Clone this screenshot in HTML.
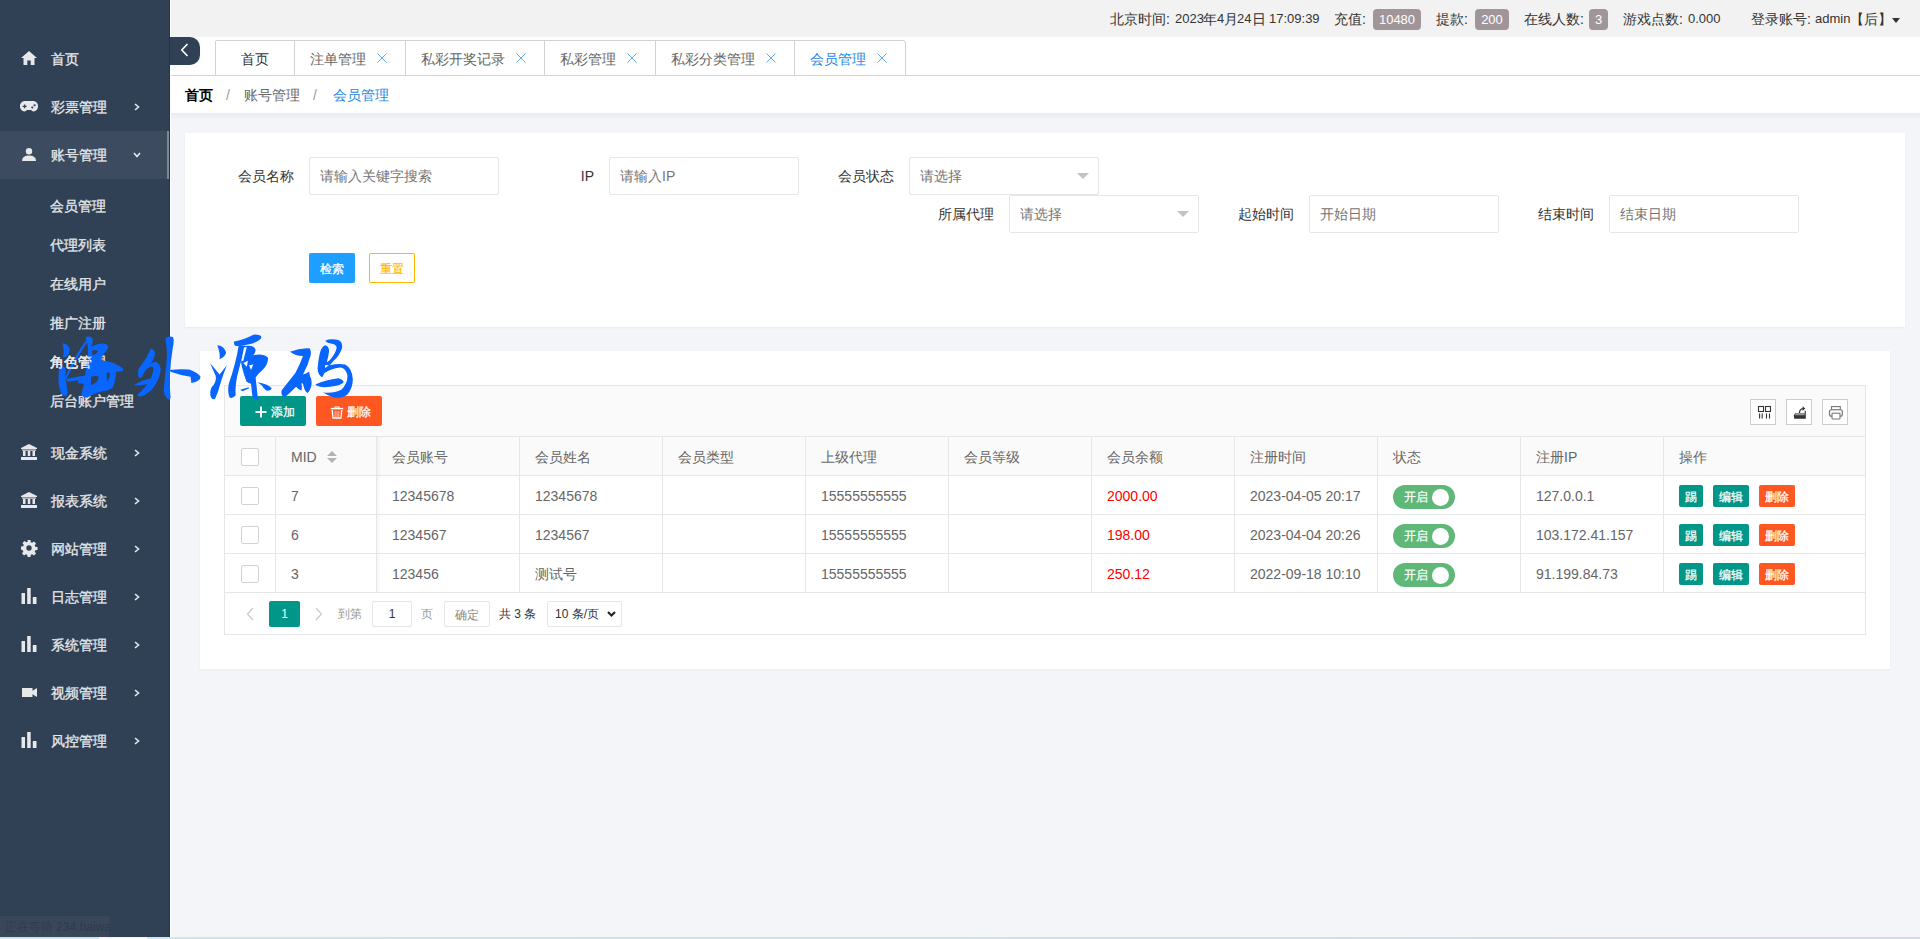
<!DOCTYPE html><html><head><meta charset="utf-8"><style>
*{box-sizing:border-box}
html,body{margin:0;padding:0}
body{width:1920px;height:939px;overflow:hidden;position:relative;background:#f4f5f9;font-family:"Liberation Sans",sans-serif;font-size:14px;color:#333}
.a{position:absolute;white-space:nowrap}
svg{position:absolute;overflow:visible}
</style></head><body>
<div class="a" style="left:170px;top:113px;width:1750px;height:826px;background:#f4f5f9"></div>
<div class="a" style="left:170px;top:113px;width:1750px;height:6px;background:linear-gradient(#e9eaef,#f4f5f9)"></div>
<div class="a" style="left:185px;top:133px;width:1720px;height:194px;background:#fff;box-shadow:0 1px 2px rgba(0,0,0,.05)"></div>
<div class="a" style="left:200px;top:351px;width:1690px;height:318px;background:#fff;box-shadow:0 1px 2px rgba(0,0,0,.05)"></div>
<div class="a" style="left:0;top:0;width:170px;height:937px;background:#304156"></div>
<div class="a" style="left:170px;top:0;width:1px;height:937px;background:#fff"></div>
<div class="a" style="left:0;top:131px;width:170px;height:48px;background:#3d4b60"></div>
<div class="a" style="left:167px;top:131px;width:3px;height:48px;background:#7b8697"></div>
<div class="a" style="left:51px;top:35px;height:48px;line-height:48px;color:#e6e8ea;font-size:14px;-webkit-text-stroke:0.3px #e6e8ea">首页</div>
<svg style="left:21px;top:51px" width="16" height="14" viewBox="0 0 16 14"><path d="M8 0 L16 7 L13.5 7 L13.5 14 L9.7 14 L9.7 9.5 L6.3 9.5 L6.3 14 L2.5 14 L2.5 7 L0 7 Z" fill="#e6e8ea"/></svg>
<div class="a" style="left:51px;top:83px;height:48px;line-height:48px;color:#e6e8ea;font-size:14px;-webkit-text-stroke:0.3px #e6e8ea">彩票管理</div>
<svg style="left:20px;top:101px" width="18" height="10.5" viewBox="0 0 18 11" preserveAspectRatio="none"><path d="M4.5 0 H13.5 A5 5 0 0 1 18 5.5 A5 5 0 0 1 13.5 11 Q12 11 11 9.5 H7 Q6 11 4.5 11 A5 5 0 0 1 0 5.5 A5 5 0 0 1 4.5 0Z" fill="#e6e8ea"/><path d="M2.6 5.6 H6.6 M4.6 3.6 V7.6" stroke="#304156" stroke-width="1.3"/><circle cx="12.3" cy="6.8" r="1.1" fill="#304156"/><circle cx="14.6" cy="4.4" r="1.1" fill="#304156"/></svg>
<svg style="left:134px;top:103px" width="6" height="8" viewBox="0 0 6 8"><path d="M1 1 L4.5 4 L1 7" stroke="#e6e8ea" stroke-width="1.6" fill="none"/></svg>
<div class="a" style="left:51px;top:131px;height:48px;line-height:48px;color:#e6e8ea;font-size:14px;-webkit-text-stroke:0.3px #e6e8ea">账号管理</div>
<svg style="left:22px;top:148px" width="14" height="13" viewBox="0 0 14 13"><circle cx="7" cy="3.2" r="3.2" fill="#e6e8ea"/><path d="M0 13 Q0 7.5 7 7.5 Q14 7.5 14 13Z" fill="#e6e8ea"/></svg>
<svg style="left:133px;top:152px" width="8" height="6" viewBox="0 0 8 6"><path d="M1 1 L4 4.5 L7 1" stroke="#e6e8ea" stroke-width="1.6" fill="none"/></svg>
<div class="a" style="left:50px;top:187px;height:39px;line-height:39px;color:#e6e8ea;font-size:14px;-webkit-text-stroke:0.3px #e6e8ea">会员管理</div>
<div class="a" style="left:50px;top:226px;height:39px;line-height:39px;color:#e6e8ea;font-size:14px;-webkit-text-stroke:0.3px #e6e8ea">代理列表</div>
<div class="a" style="left:50px;top:265px;height:39px;line-height:39px;color:#e6e8ea;font-size:14px;-webkit-text-stroke:0.3px #e6e8ea">在线用户</div>
<div class="a" style="left:50px;top:304px;height:39px;line-height:39px;color:#e6e8ea;font-size:14px;-webkit-text-stroke:0.3px #e6e8ea">推广注册</div>
<div class="a" style="left:50px;top:343px;height:39px;line-height:39px;color:#e6e8ea;font-size:14px;-webkit-text-stroke:0.3px #e6e8ea">角色管理</div>
<div class="a" style="left:50px;top:382px;height:39px;line-height:39px;color:#e6e8ea;font-size:14px;-webkit-text-stroke:0.3px #e6e8ea">后台账户管理</div>
<div class="a" style="left:51px;top:429px;height:48px;line-height:48px;color:#e6e8ea;font-size:14px;-webkit-text-stroke:0.3px #e6e8ea">现金系统</div>
<svg style="left:21px;top:444px" width="16" height="16" viewBox="0 0 16 16"><path d="M8 0 L16 4 V5 H0 V4Z" fill="#e6e8ea"/><rect x="1" y="5.5" width="14" height="1.2" fill="#e6e8ea"/><rect x="2" y="7" width="2.5" height="5" fill="#e6e8ea"/><rect x="6.75" y="7" width="2.5" height="5" fill="#e6e8ea"/><rect x="11.5" y="7" width="2.5" height="5" fill="#e6e8ea"/><rect x="0" y="13" width="16" height="3" fill="#e6e8ea"/></svg>
<svg style="left:134px;top:449px" width="6" height="8" viewBox="0 0 6 8"><path d="M1 1 L4.5 4 L1 7" stroke="#e6e8ea" stroke-width="1.6" fill="none"/></svg>
<div class="a" style="left:51px;top:477px;height:48px;line-height:48px;color:#e6e8ea;font-size:14px;-webkit-text-stroke:0.3px #e6e8ea">报表系统</div>
<svg style="left:21px;top:492px" width="16" height="16" viewBox="0 0 16 16"><path d="M8 0 L16 4 V5 H0 V4Z" fill="#e6e8ea"/><rect x="1" y="5.5" width="14" height="1.2" fill="#e6e8ea"/><rect x="2" y="7" width="2.5" height="5" fill="#e6e8ea"/><rect x="6.75" y="7" width="2.5" height="5" fill="#e6e8ea"/><rect x="11.5" y="7" width="2.5" height="5" fill="#e6e8ea"/><rect x="0" y="13" width="16" height="3" fill="#e6e8ea"/></svg>
<svg style="left:134px;top:497px" width="6" height="8" viewBox="0 0 6 8"><path d="M1 1 L4.5 4 L1 7" stroke="#e6e8ea" stroke-width="1.6" fill="none"/></svg>
<div class="a" style="left:51px;top:525px;height:48px;line-height:48px;color:#e6e8ea;font-size:14px;-webkit-text-stroke:0.3px #e6e8ea">网站管理</div>
<svg style="left:21px;top:540px" width="16" height="16" viewBox="0 0 16 16"><path d="M6.6 0h2.8l.4 2.2 1.3.6 1.9-1.3 2 2-1.3 1.9.6 1.3 2.2.4v2.8l-2.2.4-.6 1.3 1.3 1.9-2 2-1.9-1.3-1.3.6-.4 2.2H6.6l-.4-2.2-1.3-.6-1.9 1.3-2-2 1.3-1.9-.6-1.3L0 9.4V6.6l2.2-.4.6-1.3-1.3-1.9 2-2 1.9 1.3 1.3-.6z M8 5.3A2.7 2.7 0 1 0 8 10.7 2.7 2.7 0 1 0 8 5.3z" fill="#e6e8ea" fill-rule="evenodd"/></svg>
<svg style="left:134px;top:545px" width="6" height="8" viewBox="0 0 6 8"><path d="M1 1 L4.5 4 L1 7" stroke="#e6e8ea" stroke-width="1.6" fill="none"/></svg>
<div class="a" style="left:51px;top:573px;height:48px;line-height:48px;color:#e6e8ea;font-size:14px;-webkit-text-stroke:0.3px #e6e8ea">日志管理</div>
<svg style="left:21px;top:588px" width="16" height="16" viewBox="0 0 16 16"><rect x="0.5" y="5" width="3.5" height="11" fill="#e6e8ea"/><rect x="6.2" y="0" width="3.5" height="16" fill="#e6e8ea"/><rect x="11.8" y="9" width="3.7" height="7" fill="#e6e8ea"/></svg>
<svg style="left:134px;top:593px" width="6" height="8" viewBox="0 0 6 8"><path d="M1 1 L4.5 4 L1 7" stroke="#e6e8ea" stroke-width="1.6" fill="none"/></svg>
<div class="a" style="left:51px;top:621px;height:48px;line-height:48px;color:#e6e8ea;font-size:14px;-webkit-text-stroke:0.3px #e6e8ea">系统管理</div>
<svg style="left:21px;top:636px" width="16" height="16" viewBox="0 0 16 16"><rect x="0.5" y="5" width="3.5" height="11" fill="#e6e8ea"/><rect x="6.2" y="0" width="3.5" height="16" fill="#e6e8ea"/><rect x="11.8" y="9" width="3.7" height="7" fill="#e6e8ea"/></svg>
<svg style="left:134px;top:641px" width="6" height="8" viewBox="0 0 6 8"><path d="M1 1 L4.5 4 L1 7" stroke="#e6e8ea" stroke-width="1.6" fill="none"/></svg>
<div class="a" style="left:51px;top:669px;height:48px;line-height:48px;color:#e6e8ea;font-size:14px;-webkit-text-stroke:0.3px #e6e8ea">视频管理</div>
<svg style="left:22px;top:688px" width="15" height="9" viewBox="0 0 15 9"><rect x="0" y="0" width="10.5" height="9" fill="#e6e8ea"/><path d="M10 3 L15 0 V9 L10 6Z" fill="#e6e8ea"/></svg>
<svg style="left:134px;top:689px" width="6" height="8" viewBox="0 0 6 8"><path d="M1 1 L4.5 4 L1 7" stroke="#e6e8ea" stroke-width="1.6" fill="none"/></svg>
<div class="a" style="left:51px;top:717px;height:48px;line-height:48px;color:#e6e8ea;font-size:14px;-webkit-text-stroke:0.3px #e6e8ea">风控管理</div>
<svg style="left:21px;top:732px" width="16" height="16" viewBox="0 0 16 16"><rect x="0.5" y="5" width="3.5" height="11" fill="#e6e8ea"/><rect x="6.2" y="0" width="3.5" height="16" fill="#e6e8ea"/><rect x="11.8" y="9" width="3.7" height="7" fill="#e6e8ea"/></svg>
<svg style="left:134px;top:737px" width="6" height="8" viewBox="0 0 6 8"><path d="M1 1 L4.5 4 L1 7" stroke="#e6e8ea" stroke-width="1.6" fill="none"/></svg>
<div class="a" style="left:0;top:916px;width:109px;height:21px;background:#3a4759;color:#2d3b50;font-size:12px;line-height:22px;padding-left:5px;overflow:hidden">正在等待 234.haiwai</div>
<div class="a" style="left:0;top:937px;width:1920px;height:2px;background:linear-gradient(to right,#cfe4ee,#cfe3ec 50%,#d2dcea)"></div>
<div class="a" style="left:169px;top:0;width:1px;height:937px;background:#26344a"></div>
<div class="a" style="left:99px;top:937px;width:48px;height:2px;background:#f4f8fa"></div>
<div class="a" style="left:171px;top:0;width:1749px;height:37px;background:#f2f2f2"></div>
<div class="a" style="left:1110px;top:9px;line-height:20px;height:20px;color:#333;font-size:14px">北京时间</div>
<div class="a" style="left:1166px;top:9px;line-height:20px;height:20px;color:#333;font-size:14px">:</div>
<div class="a" style="left:1175px;top:9px;line-height:20px;height:20px;color:#333;font-size:13px">2023</div>
<div class="a" style="left:1203px;top:9px;line-height:20px;height:20px;color:#333;font-size:14px">年</div>
<div class="a" style="left:1217px;top:9px;line-height:20px;height:20px;color:#333;font-size:13px">4</div>
<div class="a" style="left:1224px;top:9px;line-height:20px;height:20px;color:#333;font-size:14px">月</div>
<div class="a" style="left:1237px;top:9px;line-height:20px;height:20px;color:#333;font-size:13px">24</div>
<div class="a" style="left:1252px;top:9px;line-height:20px;height:20px;color:#333;font-size:14px">日</div>
<div class="a" style="left:1269px;top:9px;line-height:20px;height:20px;color:#333;font-size:13px">17:09:39</div>
<div class="a" style="left:1334px;top:9px;line-height:20px;height:20px;color:#333;font-size:14px">充值</div>
<div class="a" style="left:1362px;top:9px;line-height:20px;height:20px;color:#333;font-size:14px">:</div>
<div class="a" style="left:1373px;top:9px;width:48px;height:21px;line-height:21px;background:#a09699;color:#fff;border-radius:4px;text-align:center;font-size:13px">10480</div>
<div class="a" style="left:1436px;top:9px;line-height:20px;height:20px;color:#333;font-size:14px">提款</div>
<div class="a" style="left:1464px;top:9px;line-height:20px;height:20px;color:#333;font-size:14px">:</div>
<div class="a" style="left:1475px;top:9px;width:34px;height:21px;line-height:21px;background:#a09699;color:#fff;border-radius:4px;text-align:center;font-size:13px">200</div>
<div class="a" style="left:1524px;top:9px;line-height:20px;height:20px;color:#333;font-size:14px">在线人数</div>
<div class="a" style="left:1580px;top:9px;line-height:20px;height:20px;color:#333;font-size:14px">:</div>
<div class="a" style="left:1589px;top:9px;width:19px;height:21px;line-height:21px;background:#a09699;color:#fff;border-radius:4px;text-align:center;font-size:13px">3</div>
<div class="a" style="left:1623px;top:9px;line-height:20px;height:20px;color:#333;font-size:14px">游戏点数</div>
<div class="a" style="left:1679px;top:9px;line-height:20px;height:20px;color:#333;font-size:14px">:</div>
<div class="a" style="left:1688px;top:9px;line-height:20px;height:20px;color:#333;font-size:13px">0.000</div>
<div class="a" style="left:1751px;top:9px;line-height:20px;height:20px;color:#333;font-size:14px">登录账号</div>
<div class="a" style="left:1807px;top:9px;line-height:20px;height:20px;color:#333;font-size:14px">:</div>
<div class="a" style="left:1815px;top:9px;line-height:20px;height:20px;color:#333;font-size:13px">admin</div>
<div class="a" style="left:1850px;top:9px;line-height:20px;height:20px;color:#333;font-size:14px">【后】</div>
<svg style="left:1892px;top:18px" width="8" height="5" viewBox="0 0 8 5"><path d="M0 0 H8 L4 5Z" fill="#333"/></svg>
<div class="a" style="left:171px;top:37px;width:1749px;height:39px;background:#fff;border-bottom:1px solid #d2d2d2"></div>
<div class="a" style="left:170px;top:37px;width:30px;height:28px;background:#304156;border-radius:0 10px 10px 0"></div>
<svg style="left:180px;top:43px" width="9" height="14" viewBox="0 0 9 14"><path d="M7.5 1 L1.8 7 L7.5 13" stroke="#fff" stroke-width="1.6" fill="none"/></svg>
<div class="a" style="left:215px;top:40px;width:691px;height:36px;border:1px solid #d2d2d2;border-bottom:none;border-radius:2px 4px 0 0;background:#fff"></div>
<div class="a" style="left:171px;top:75px;width:1749px;height:1px;background:#d2d2d2"></div>
<div class="a" style="left:241px;top:49px;line-height:20px;color:#333;font-size:14px">首页</div>
<div class="a" style="left:294px;top:41px;width:1px;height:34px;background:#d2d2d2"></div>
<div class="a" style="left:310px;top:49px;line-height:20px;color:#666;font-size:14px">注单管理</div>
<svg style="left:377px;top:53px" width="10" height="10" viewBox="0 0 10 10"><path d="M0.5 0.5 L9.5 9.5 M9.5 0.5 L0.5 9.5" stroke="#4aa4f2" stroke-width="0.9"/></svg>
<div class="a" style="left:405px;top:41px;width:1px;height:34px;background:#d2d2d2"></div>
<div class="a" style="left:421px;top:49px;line-height:20px;color:#666;font-size:14px">私彩开奖记录</div>
<svg style="left:516px;top:53px" width="10" height="10" viewBox="0 0 10 10"><path d="M0.5 0.5 L9.5 9.5 M9.5 0.5 L0.5 9.5" stroke="#4aa4f2" stroke-width="0.9"/></svg>
<div class="a" style="left:544px;top:41px;width:1px;height:34px;background:#d2d2d2"></div>
<div class="a" style="left:560px;top:49px;line-height:20px;color:#666;font-size:14px">私彩管理</div>
<svg style="left:627px;top:53px" width="10" height="10" viewBox="0 0 10 10"><path d="M0.5 0.5 L9.5 9.5 M9.5 0.5 L0.5 9.5" stroke="#4aa4f2" stroke-width="0.9"/></svg>
<div class="a" style="left:655px;top:41px;width:1px;height:34px;background:#d2d2d2"></div>
<div class="a" style="left:671px;top:49px;line-height:20px;color:#666;font-size:14px">私彩分类管理</div>
<svg style="left:766px;top:53px" width="10" height="10" viewBox="0 0 10 10"><path d="M0.5 0.5 L9.5 9.5 M9.5 0.5 L0.5 9.5" stroke="#4aa4f2" stroke-width="0.9"/></svg>
<div class="a" style="left:794px;top:41px;width:1px;height:34px;background:#d2d2d2"></div>
<div class="a" style="left:810px;top:49px;line-height:20px;color:#1e88e5;font-size:14px">会员管理</div>
<svg style="left:877px;top:53px" width="10" height="10" viewBox="0 0 10 10"><path d="M0.5 0.5 L9.5 9.5 M9.5 0.5 L0.5 9.5" stroke="#4aa4f2" stroke-width="0.9"/></svg>
<div class="a" style="left:171px;top:76px;width:1749px;height:37px;background:#fff"></div>
<div class="a" style="left:185px;top:85px;line-height:20px;height:20px;color:#000;font-size:14px;font-weight:bold">首页</div>
<div class="a" style="left:226px;top:85px;line-height:20px;height:20px;color:#999;font-size:14px;">/</div>
<div class="a" style="left:244px;top:85px;line-height:20px;height:20px;color:#666;font-size:14px;">账号管理</div>
<div class="a" style="left:313px;top:85px;line-height:20px;height:20px;color:#999;font-size:14px;">/</div>
<div class="a" style="left:333px;top:85px;line-height:20px;height:20px;color:#1e88e5;font-size:14px;">会员管理</div>
<div class="a" style="left:294px;top:157px;width:120px;margin-left:-120px;height:38px;line-height:38px;text-align:right;color:#333">会员名称</div>
<div class="a" style="left:309px;top:157px;width:190px;height:38px;border:1px solid #e6e6e6;border-radius:2px;background:#fff;line-height:36px;padding-left:10px;color:#757575">请输入关键字搜索</div>
<div class="a" style="left:594px;top:157px;width:120px;margin-left:-120px;height:38px;line-height:38px;text-align:right;color:#333">IP</div>
<div class="a" style="left:609px;top:157px;width:190px;height:38px;border:1px solid #e6e6e6;border-radius:2px;background:#fff;line-height:36px;padding-left:10px;color:#757575">请输入IP</div>
<div class="a" style="left:894px;top:157px;width:120px;margin-left:-120px;height:38px;line-height:38px;text-align:right;color:#333">会员状态</div>
<div class="a" style="left:909px;top:157px;width:190px;height:38px;border:1px solid #e6e6e6;border-radius:2px;background:#fff;line-height:36px;padding-left:10px;color:#757575">请选择</div>
<svg style="left:1077px;top:173px" width="12" height="6" viewBox="0 0 12 6"><path d="M0 0 H12 L6 6Z" fill="#c2c2c2"/></svg>
<div class="a" style="left:994px;top:195px;width:120px;margin-left:-120px;height:38px;line-height:38px;text-align:right;color:#333">所属代理</div>
<div class="a" style="left:1009px;top:195px;width:190px;height:38px;border:1px solid #e6e6e6;border-radius:2px;background:#fff;line-height:36px;padding-left:10px;color:#757575">请选择</div>
<svg style="left:1177px;top:211px" width="12" height="6" viewBox="0 0 12 6"><path d="M0 0 H12 L6 6Z" fill="#c2c2c2"/></svg>
<div class="a" style="left:1294px;top:195px;width:120px;margin-left:-120px;height:38px;line-height:38px;text-align:right;color:#333">起始时间</div>
<div class="a" style="left:1309px;top:195px;width:190px;height:38px;border:1px solid #e6e6e6;border-radius:2px;background:#fff;line-height:36px;padding-left:10px;color:#757575">开始日期</div>
<div class="a" style="left:1594px;top:195px;width:120px;margin-left:-120px;height:38px;line-height:38px;text-align:right;color:#333">结束时间</div>
<div class="a" style="left:1609px;top:195px;width:190px;height:38px;border:1px solid #e6e6e6;border-radius:2px;background:#fff;line-height:36px;padding-left:10px;color:#757575">结束日期</div>
<div class="a" style="left:309px;top:253px;width:46px;height:30px;line-height:32px;background:#1e9fff;color:#fff;font-size:12px;text-align:center;border-radius:2px;-webkit-text-stroke:0.25px #fff">检索</div>
<div class="a" style="left:369px;top:253px;width:46px;height:30px;line-height:30px;background:#fff;border:1px solid #ffb800;color:#ffb800;font-size:12px;text-align:center;border-radius:2px;-webkit-text-stroke:0.2px #ffb800">重置</div>
<div class="a" style="left:224px;top:385px;width:1642px;height:250px;border:1px solid #e6e6e6;background:#fff"></div>
<div class="a" style="left:225px;top:386px;width:1640px;height:51px;background:#fafafa;border-bottom:1px solid #e6e6e6"></div>
<div class="a" style="left:240px;top:396px;width:66px;height:30px;background:#009688;border-radius:2px"></div>
<svg style="left:255px;top:406px" width="12" height="12" viewBox="0 0 12 12"><path d="M6 0.5 V11.5 M0.5 6 H11.5" stroke="#fff" stroke-width="2"/></svg>
<div class="a" style="left:271px;top:402px;line-height:20px;color:#fff;font-size:12px;-webkit-text-stroke:0.25px #fff">添加</div>
<div class="a" style="left:316px;top:396px;width:66px;height:30px;background:#ff5722;border-radius:2px"></div>
<svg style="left:330px;top:406px" width="14" height="13" viewBox="0 0 14 13"><path d="M0.8 2.6 H13.2" stroke="#fff" stroke-width="1.4"/><path d="M5 2.2 V1 H9 V2.2" stroke="#fff" stroke-width="1.1" fill="none"/><path d="M2.2 4 L3 12 H11 L11.8 4" stroke="#fff" stroke-width="1.3" fill="none"/><path d="M5.2 5 V11 M7 5 V11 M8.8 5 V11" stroke="#ffd9cc" stroke-width="0.8"/></svg>
<div class="a" style="left:347px;top:402px;line-height:20px;color:#fff;font-size:12px;-webkit-text-stroke:0.25px #fff">删除</div>
<div class="a" style="left:1750px;top:399px;width:26px;height:26px;border:1px solid #ccc;background:#fff"></div>
<div class="a" style="left:1786px;top:399px;width:26px;height:26px;border:1px solid #ccc;background:#fff"></div>
<div class="a" style="left:1822px;top:399px;width:26px;height:26px;border:1px solid #ccc;background:#fff"></div>
<svg style="left:1757px;top:405px" width="15" height="15" viewBox="0 0 15 15"><rect x="1.5" y="1.5" width="5" height="5" fill="none" stroke="#333" stroke-width="1.1"/><rect x="8.5" y="1.5" width="5" height="5" fill="none" stroke="#333" stroke-width="1.1"/><path d="M2.6 8.5 V13.6 M5.2 8.5 V13.6 M9.5 8.5 V13.6 M12.5 8.5 V13.6" stroke="#333" stroke-width="1.1"/></svg>
<svg style="left:1793px;top:405px" width="15" height="15" viewBox="0 0 15 15"><path d="M0.8 10.2 L2.3 8.3 H11.7 V5.8 H12.8 V13.8 H1.2Z" fill="#333"/><path d="M3 8.3 H11.7 V10.2 H1.6Z" fill="#999"/><path d="M6.5 8 Q6.5 3.8 10 3.6" stroke="#333" stroke-width="1.3" fill="none"/><path d="M9.6 1.2 L12.3 3.6 L9.6 6Z" fill="#333"/></svg>
<svg style="left:1828px;top:405px" width="16" height="16" viewBox="0 0 16 16"><rect x="3.5" y="1.6" width="8.8" height="3.4" fill="none" stroke="#777" stroke-width="1.1"/><rect x="1.4" y="4.8" width="13" height="6.5" rx="2" fill="#f4f4f4" stroke="#777" stroke-width="1.1"/><rect x="4" y="8.3" width="8" height="5.7" rx="0.8" fill="#fff" stroke="#777" stroke-width="1.1"/></svg>
<div class="a" style="left:225px;top:437px;width:1640px;height:38px;background:#fafafa"></div>
<div class="a" style="left:225px;top:475px;width:1640px;height:1px;background:#e6e6e6"></div>
<div class="a" style="left:225px;top:514px;width:1640px;height:1px;background:#e6e6e6"></div>
<div class="a" style="left:225px;top:553px;width:1640px;height:1px;background:#e6e6e6"></div>
<div class="a" style="left:225px;top:592px;width:1640px;height:1px;background:#e6e6e6"></div>
<div class="a" style="left:275px;top:437px;width:1px;height:155px;background:#e6e6e6"></div>
<div class="a" style="left:376px;top:437px;width:1px;height:155px;background:#e6e6e6"></div>
<div class="a" style="left:519px;top:437px;width:1px;height:155px;background:#e6e6e6"></div>
<div class="a" style="left:662px;top:437px;width:1px;height:155px;background:#e6e6e6"></div>
<div class="a" style="left:805px;top:437px;width:1px;height:155px;background:#e6e6e6"></div>
<div class="a" style="left:948px;top:437px;width:1px;height:155px;background:#e6e6e6"></div>
<div class="a" style="left:1091px;top:437px;width:1px;height:155px;background:#e6e6e6"></div>
<div class="a" style="left:1234px;top:437px;width:1px;height:155px;background:#e6e6e6"></div>
<div class="a" style="left:1377px;top:437px;width:1px;height:155px;background:#e6e6e6"></div>
<div class="a" style="left:1520px;top:437px;width:1px;height:155px;background:#e6e6e6"></div>
<div class="a" style="left:1663px;top:437px;width:1px;height:155px;background:#e6e6e6"></div>
<div class="a" style="left:377px;top:437px;width:4px;height:155px;background:linear-gradient(to right,rgba(0,0,0,.04),rgba(0,0,0,0))"></div>
<div class="a" style="left:291px;top:447px;line-height:20px;color:#666;font-size:14px">MID</div>
<div class="a" style="left:392px;top:447px;line-height:20px;color:#666;font-size:14px">会员账号</div>
<div class="a" style="left:535px;top:447px;line-height:20px;color:#666;font-size:14px">会员姓名</div>
<div class="a" style="left:678px;top:447px;line-height:20px;color:#666;font-size:14px">会员类型</div>
<div class="a" style="left:821px;top:447px;line-height:20px;color:#666;font-size:14px">上级代理</div>
<div class="a" style="left:964px;top:447px;line-height:20px;color:#666;font-size:14px">会员等级</div>
<div class="a" style="left:1107px;top:447px;line-height:20px;color:#666;font-size:14px">会员余额</div>
<div class="a" style="left:1250px;top:447px;line-height:20px;color:#666;font-size:14px">注册时间</div>
<div class="a" style="left:1393px;top:447px;line-height:20px;color:#666;font-size:14px">状态</div>
<div class="a" style="left:1536px;top:447px;line-height:20px;color:#666;font-size:14px">注册IP</div>
<div class="a" style="left:1679px;top:447px;line-height:20px;color:#666;font-size:14px">操作</div>
<svg style="left:327px;top:451px" width="10" height="13" viewBox="0 0 10 13"><path d="M5 0 L10 5 H0Z M0 7 H10 L5 12Z" fill="#b2b2b2"/></svg>
<div class="a" style="left:291px;top:486px;line-height:20px;color:#666;font-size:14px">7</div>
<div class="a" style="left:392px;top:486px;line-height:20px;color:#666;font-size:14px">12345678</div>
<div class="a" style="left:535px;top:486px;line-height:20px;color:#666;font-size:14px">12345678</div>
<div class="a" style="left:678px;top:486px;line-height:20px;color:#666;font-size:14px"></div>
<div class="a" style="left:821px;top:486px;line-height:20px;color:#666;font-size:14px">15555555555</div>
<div class="a" style="left:964px;top:486px;line-height:20px;color:#666;font-size:14px"></div>
<div class="a" style="left:1107px;top:486px;line-height:20px;color:#f00;font-size:14px">2000.00</div>
<div class="a" style="left:1250px;top:486px;line-height:20px;color:#666;font-size:14px">2023-04-05 20:17</div>
<div class="a" style="left:1393px;top:485px;width:62px;height:24px;border-radius:12px;background:#5fb878"></div>
<div class="a" style="left:1432px;top:489px;width:17px;height:17px;border-radius:50%;background:#fff"></div>
<div class="a" style="left:1404px;top:487px;line-height:20px;color:#fff;font-size:12px;-webkit-text-stroke:0.2px #fff">开启</div>
<div class="a" style="left:1536px;top:486px;line-height:20px;color:#666;font-size:14px">127.0.0.1</div>
<div class="a" style="left:1679px;top:485px;width:24px;height:22px;line-height:24px;background:#009688;color:#fff;font-size:12px;text-align:center;border-radius:2px;-webkit-text-stroke:0.25px #fff">踢</div>
<div class="a" style="left:1713px;top:485px;width:36px;height:22px;line-height:24px;background:#009688;color:#fff;font-size:12px;text-align:center;border-radius:2px;-webkit-text-stroke:0.25px #fff">编辑</div>
<div class="a" style="left:1759px;top:485px;width:36px;height:22px;line-height:24px;background:#ff5722;color:#fff;font-size:12px;text-align:center;border-radius:2px;-webkit-text-stroke:0.25px #fff">删除</div>
<div class="a" style="left:291px;top:525px;line-height:20px;color:#666;font-size:14px">6</div>
<div class="a" style="left:392px;top:525px;line-height:20px;color:#666;font-size:14px">1234567</div>
<div class="a" style="left:535px;top:525px;line-height:20px;color:#666;font-size:14px">1234567</div>
<div class="a" style="left:678px;top:525px;line-height:20px;color:#666;font-size:14px"></div>
<div class="a" style="left:821px;top:525px;line-height:20px;color:#666;font-size:14px">15555555555</div>
<div class="a" style="left:964px;top:525px;line-height:20px;color:#666;font-size:14px"></div>
<div class="a" style="left:1107px;top:525px;line-height:20px;color:#f00;font-size:14px">198.00</div>
<div class="a" style="left:1250px;top:525px;line-height:20px;color:#666;font-size:14px">2023-04-04 20:26</div>
<div class="a" style="left:1393px;top:524px;width:62px;height:24px;border-radius:12px;background:#5fb878"></div>
<div class="a" style="left:1432px;top:528px;width:17px;height:17px;border-radius:50%;background:#fff"></div>
<div class="a" style="left:1404px;top:526px;line-height:20px;color:#fff;font-size:12px;-webkit-text-stroke:0.2px #fff">开启</div>
<div class="a" style="left:1536px;top:525px;line-height:20px;color:#666;font-size:14px">103.172.41.157</div>
<div class="a" style="left:1679px;top:524px;width:24px;height:22px;line-height:24px;background:#009688;color:#fff;font-size:12px;text-align:center;border-radius:2px;-webkit-text-stroke:0.25px #fff">踢</div>
<div class="a" style="left:1713px;top:524px;width:36px;height:22px;line-height:24px;background:#009688;color:#fff;font-size:12px;text-align:center;border-radius:2px;-webkit-text-stroke:0.25px #fff">编辑</div>
<div class="a" style="left:1759px;top:524px;width:36px;height:22px;line-height:24px;background:#ff5722;color:#fff;font-size:12px;text-align:center;border-radius:2px;-webkit-text-stroke:0.25px #fff">删除</div>
<div class="a" style="left:291px;top:564px;line-height:20px;color:#666;font-size:14px">3</div>
<div class="a" style="left:392px;top:564px;line-height:20px;color:#666;font-size:14px">123456</div>
<div class="a" style="left:535px;top:564px;line-height:20px;color:#666;font-size:14px">测试号</div>
<div class="a" style="left:678px;top:564px;line-height:20px;color:#666;font-size:14px"></div>
<div class="a" style="left:821px;top:564px;line-height:20px;color:#666;font-size:14px">15555555555</div>
<div class="a" style="left:964px;top:564px;line-height:20px;color:#666;font-size:14px"></div>
<div class="a" style="left:1107px;top:564px;line-height:20px;color:#f00;font-size:14px">250.12</div>
<div class="a" style="left:1250px;top:564px;line-height:20px;color:#666;font-size:14px">2022-09-18 10:10</div>
<div class="a" style="left:1393px;top:563px;width:62px;height:24px;border-radius:12px;background:#5fb878"></div>
<div class="a" style="left:1432px;top:567px;width:17px;height:17px;border-radius:50%;background:#fff"></div>
<div class="a" style="left:1404px;top:565px;line-height:20px;color:#fff;font-size:12px;-webkit-text-stroke:0.2px #fff">开启</div>
<div class="a" style="left:1536px;top:564px;line-height:20px;color:#666;font-size:14px">91.199.84.73</div>
<div class="a" style="left:1679px;top:563px;width:24px;height:22px;line-height:24px;background:#009688;color:#fff;font-size:12px;text-align:center;border-radius:2px;-webkit-text-stroke:0.25px #fff">踢</div>
<div class="a" style="left:1713px;top:563px;width:36px;height:22px;line-height:24px;background:#009688;color:#fff;font-size:12px;text-align:center;border-radius:2px;-webkit-text-stroke:0.25px #fff">编辑</div>
<div class="a" style="left:1759px;top:563px;width:36px;height:22px;line-height:24px;background:#ff5722;color:#fff;font-size:12px;text-align:center;border-radius:2px;-webkit-text-stroke:0.25px #fff">删除</div>
<div class="a" style="left:241px;top:448px;width:18px;height:18px;border:1px solid #d2d2d2;border-radius:2px;background:#fff"></div>
<div class="a" style="left:241px;top:487px;width:18px;height:18px;border:1px solid #d2d2d2;border-radius:2px;background:#fff"></div>
<div class="a" style="left:241px;top:526px;width:18px;height:18px;border:1px solid #d2d2d2;border-radius:2px;background:#fff"></div>
<div class="a" style="left:241px;top:565px;width:18px;height:18px;border:1px solid #d2d2d2;border-radius:2px;background:#fff"></div>
<svg style="left:246px;top:607px" width="8" height="14" viewBox="0 0 8 14"><path d="M7 1 L1.5 7 L7 13" stroke="#c9c9c9" stroke-width="1.2" fill="none"/></svg>
<div class="a" style="left:269px;top:601px;width:31px;height:26px;line-height:26px;background:#009688;color:#fff;font-size:12px;text-align:center;border-radius:2px">1</div>
<svg style="left:315px;top:607px" width="8" height="14" viewBox="0 0 8 14"><path d="M1 1 L6.5 7 L1 13" stroke="#c9c9c9" stroke-width="1.2" fill="none"/></svg>
<div class="a" style="left:338px;top:604px;line-height:20px;color:#999;font-size:12px">到第</div>
<div class="a" style="left:372px;top:601px;width:40px;height:26px;line-height:24px;border:1px solid #e6e6e6;color:#333;font-size:12px;text-align:center;border-radius:2px">1</div>
<div class="a" style="left:421px;top:604px;line-height:20px;color:#999;font-size:12px">页</div>
<div class="a" style="left:444px;top:601px;width:46px;height:26px;line-height:26px;border:1px solid #e6e6e6;color:#888;font-size:12px;text-align:center;border-radius:2px">确定</div>
<div class="a" style="left:499px;top:604px;line-height:20px;color:#333;font-size:12px">共 3 条</div>
<div class="a" style="left:547px;top:601px;width:75px;height:26px;line-height:24px;border:1px solid #e6e6e6;color:#333;font-size:12px;padding-left:7px;border-radius:2px">10 条/页</div>
<svg style="left:607px;top:611px" width="9" height="6" viewBox="0 0 9 6"><path d="M1 1 L4.5 4.5 L8 1" stroke="#222" stroke-width="2.1" fill="none"/></svg>
<svg style="left:0;top:0" width="1920" height="939" viewBox="0 0 1920 939"><g transform="translate(55,330) scale(0.076687)"><path d="M95,175 Q160,170 190,240 Q200,300 150,345 Q120,360 100,360 Q130,280 95,175Z" fill="#0866ff"/><path d="M70,470 Q130,460 140,520 Q130,620 150,720 Q170,800 160,850 Q130,870 100,850 Q50,780 45,650 Q45,540 70,470Z" fill="#0866ff"/><path d="M125,640 Q250,330 432,100 L450,114 Q300,330 145,645Z" fill="#0866ff"/><path d="M150,640 Q300,600 480,585 L480,635 Q300,655 160,675Z" fill="#0866ff"/><path d="M400,95 Q450,70 490,110 Q500,170 470,220 Q560,170 640,175 Q700,195 695,230 Q660,290 620,330 Q600,370 610,400 Q720,400 820,460 Q900,500 890,530 Q850,545 800,540 Q790,650 760,740 Q720,790 620,800 Q520,820 440,870 Q380,890 340,850 Q360,780 380,700 Q330,700 300,690 L310,650 Q380,640 390,620 Q410,450 430,320 Q440,220 400,95Z" fill="#0866ff"/><path d="M480,270 Q540,250 560,280 Q540,320 490,330Z" fill="#304156"/><path d="M470,610 Q540,590 570,610 Q560,690 470,720Z" fill="#304156"/><path d="M670,560 Q710,545 720,570 Q710,640 680,670Z" fill="#304156"/></g><g transform="translate(130,330) scale(0.076687)"><path d="M270,240 Q330,250 325,320 Q310,400 240,470 Q180,560 150,620 Q110,630 105,580 Q100,500 140,470 Q220,370 270,240Z" fill="#0866ff"/><path d="M200,480 Q300,410 350,420 Q400,450 400,530 Q380,650 300,760 Q220,850 130,870 Q90,860 100,840 Q200,760 260,650 Q320,540 300,480 Q260,470 220,510Z" fill="#0866ff"/><path d="M60,710 Q150,660 270,630 L250,700 Q160,720 80,725 Q50,725 60,710Z" fill="#0866ff"/><path d="M460,110 Q500,70 560,90 Q580,130 560,220 Q530,400 520,600 Q520,800 530,880 Q520,920 490,900 Q440,850 440,780 Q460,560 480,380 Q490,250 460,110Z" fill="#0866ff"/><path d="M520,520 Q640,505 770,515 Q880,550 920,610 Q920,670 800,690 L790,610 Q650,590 530,545Z" fill="#0866ff"/></g><g transform="translate(205,330) scale(0.076687)"><path d="M160,200 Q240,200 275,290 Q270,350 190,380 Q200,300 160,200Z" fill="#0866ff"/><path d="M65,430 L190,580 L285,460 Q230,600 200,700 Q170,820 130,900 Q80,910 70,850 Q60,760 110,720 Q150,660 140,600Z" fill="#0866ff"/><path d="M380,150 Q500,130 640,60 Q740,60 735,100 Q700,160 560,190 Q460,210 400,210 Q370,190 380,150Z" fill="#0866ff"/><path d="M440,200 L525,205 Q470,400 420,600 Q390,760 400,850 Q360,900 320,880 Q290,800 310,700 Q400,450 440,200Z" fill="#0866ff"/><path d="M520,210 Q640,190 660,260 Q650,320 620,330 Q760,300 820,360 Q830,450 740,530 Q680,580 660,620 L690,900 Q650,920 620,880 L600,700 Q560,690 540,670 Q480,500 470,420 Q500,330 520,210Z" fill="#0866ff"/><path d="M508,228 L545,222 Q525,300 500,400 L478,405 Q490,320 508,228Z" fill="#fff"/><path d="M500,430 L560,400 L545,480Z" fill="#fff"/><path d="M575,460 L630,450 L600,520Z" fill="#fff"/><path d="M460,780 L570,745 L575,760 L490,800Z" fill="#0866ff"/><path d="M680,680 Q820,700 870,760 Q860,800 800,790 Q760,760 740,720Z" fill="#0866ff"/></g><g transform="translate(280,330) scale(0.076687)"><path d="M130,285 Q260,230 390,240 Q410,280 400,330 Q370,450 300,580 Q340,570 380,540 L390,600 Q420,650 410,720 Q390,800 360,820 Q320,810 300,700 L280,690 Q290,760 280,790 Q240,780 210,740 Q120,830 60,880 Q10,860 20,790 Q120,660 200,560 Q260,450 300,340 Q200,340 130,285Z" fill="#0866ff"/><path d="M590,140 Q650,110 760,130 Q820,160 810,230 Q780,330 700,400 L650,460 Q760,430 850,450 Q940,500 950,640 Q950,760 880,840 Q800,900 700,880 Q620,850 560,815 Q700,830 800,780 Q880,700 880,600 Q860,500 790,490 Q680,500 580,560 L550,620 Q490,580 490,500 Q500,380 520,300 Q540,220 590,200 Q640,210 640,280 Q630,350 610,420 L640,400 Q720,320 740,230 Q730,190 680,180 Q610,170 590,140Z" fill="#0866ff"/><path d="M585,460 L640,455 L590,495Z" fill="#fff"/><path d="M460,710 Q600,650 760,630 Q830,650 830,680 Q800,720 650,740 Q520,760 460,710Z" fill="#0866ff"/></g></svg>
<div class="a" style="left:50px;top:343px;width:42px;overflow:hidden;height:39px;line-height:39px;color:#e6e8ea;font-size:14px;-webkit-text-stroke:0.3px #e6e8ea">角色管理</div>
</body></html>
